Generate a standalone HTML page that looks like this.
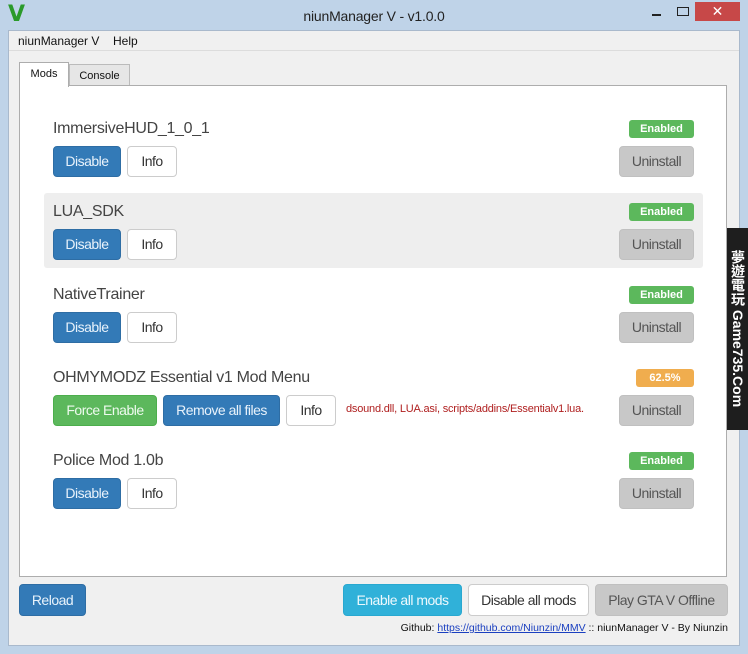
<!DOCTYPE html>
<html><head><meta charset="utf-8"><style>
*{box-sizing:border-box;margin:0;padding:0}
body{width:748px;height:654px;background:#bfd3e8;position:relative;overflow:hidden;font-family:"Liberation Sans",sans-serif;}
.a{position:absolute}
.client{left:8px;top:30px;width:732px;height:616px;background:#f0f0f0;border:1px solid #a9b9cc}
.btn{position:absolute;height:31px;border-radius:4px;font-size:14px;line-height:29px;text-align:center;border:1px solid;letter-spacing:-0.5px}
.pri{background:#337ab7;border-color:#2e6da4;color:#e8f2fb}
.def{background:#fff;border-color:#ccc;color:#333}
.gr{background:#c8c8c8;border-color:#c0c0c0;color:#555}
.suc{background:#5cb85c;border-color:#4cae4c;color:#eefaee}
.info{background:#30b1d9;border-color:#28a8d0;color:#eef9fd}
.badge{position:absolute;height:18px;border-radius:3px;font-size:11px;font-weight:bold;color:#fff;line-height:18px;text-align:center}
.name{position:absolute;font-size:16px;color:#444;letter-spacing:-0.3px}
</style></head><body>
<div class="a" style="left:8px;top:2px;font-size:22px;font-weight:bold;color:#2a9a2a;font-family:'DejaVu Sans',sans-serif">V</div>
<div class="a" style="left:0;top:8px;width:748px;text-align:center;font-size:14px;color:#222;letter-spacing:-0.2px">niunManager V - v1.0.0</div>
<div class="a" style="left:652px;top:14px;width:9px;height:2px;background:#222"></div>
<div class="a" style="left:677px;top:7px;width:12px;height:9px;border:1.5px solid #222"></div>
<div class="a" style="left:695px;top:2px;width:45px;height:19px;background:#c74848;color:#fff;text-align:center;font-size:14px;line-height:19px">✕</div>
<div class="a client"></div>
<div class="a" style="left:18px;top:34px;font-size:12px;color:#111">niunManager V</div>
<div class="a" style="left:113px;top:34px;font-size:12px;color:#111">Help</div>
<div class="a" style="left:9px;top:50px;width:730px;height:1px;background:#dcdcdc"></div>
<div class="a" style="left:69px;top:64px;width:61px;height:22px;background:#e6e6e6;border:1px solid #bbb;font-size:11px;text-align:center;line-height:22px;color:#111">Console</div>
<div class="a" style="left:19px;top:85px;width:708px;height:492px;background:#fff;border:1px solid #adadad"></div>
<div class="a" style="left:19px;top:62px;width:50px;height:25px;background:#fff;border:1px solid #adadad;border-bottom:none;font-size:11px;text-align:center;line-height:22px;color:#111">Mods</div>
<div class="a" style="left:44px;top:193px;width:659px;height:75px;background:#eee;border-radius:3px"></div>

<div class="name" style="left:53px;top:120px">ImmersiveHUD_1_0_1</div>
<div class="btn pri" style="left:53px;top:146px;width:68px">Disable</div>
<div class="btn def" style="left:127px;top:146px;width:50px">Info</div>
<div class="badge" style="left:629px;top:120px;width:65px;background:#5cb85c">Enabled</div>
<div class="btn gr" style="left:619px;top:146px;width:75px">Uninstall</div>

<div class="name" style="left:53px;top:203px">LUA_SDK</div>
<div class="btn pri" style="left:53px;top:229px;width:68px">Disable</div>
<div class="btn def" style="left:127px;top:229px;width:50px">Info</div>
<div class="badge" style="left:629px;top:203px;width:65px;background:#5cb85c">Enabled</div>
<div class="btn gr" style="left:619px;top:229px;width:75px">Uninstall</div>

<div class="name" style="left:53px;top:286px">NativeTrainer</div>
<div class="btn pri" style="left:53px;top:312px;width:68px">Disable</div>
<div class="btn def" style="left:127px;top:312px;width:50px">Info</div>
<div class="badge" style="left:629px;top:286px;width:65px;background:#5cb85c">Enabled</div>
<div class="btn gr" style="left:619px;top:312px;width:75px">Uninstall</div>

<div class="name" style="left:53px;top:369px">OHMYMODZ Essential v1 Mod Menu</div>
<div class="btn suc" style="left:53px;top:395px;width:104px">Force Enable</div>
<div class="btn pri" style="left:163px;top:395px;width:117px">Remove all files</div>
<div class="btn def" style="left:286px;top:395px;width:50px">Info</div>
<div class="a" style="left:346px;top:403px;font-size:11px;color:#b02020;letter-spacing:-0.2px">dsound.dll, LUA.asi, scripts/addins/Essentialv1.lua.</div>
<div class="badge" style="left:636px;top:369px;width:58px;background:#f0ad4e">62.5%</div>
<div class="btn gr" style="left:619px;top:395px;width:75px">Uninstall</div>

<div class="name" style="left:53px;top:452px">Police Mod 1.0b</div>
<div class="btn pri" style="left:53px;top:478px;width:68px">Disable</div>
<div class="btn def" style="left:127px;top:478px;width:50px">Info</div>
<div class="badge" style="left:629px;top:452px;width:65px;background:#5cb85c">Enabled</div>
<div class="btn gr" style="left:619px;top:478px;width:75px">Uninstall</div>

<div class="btn pri" style="left:19px;top:584px;width:67px;height:32px;line-height:30px">Reload</div>
<div class="btn info" style="left:343px;top:584px;width:119px;height:32px;line-height:30px">Enable all mods</div>
<div class="btn def" style="left:468px;top:584px;width:121px;height:32px;line-height:30px">Disable all mods</div>
<div class="btn gr" style="left:595px;top:584px;width:133px;height:32px;line-height:30px">Play GTA V Offline</div>
<div class="a" style="right:20px;top:622px;font-size:10.5px;color:#111">Github: <span style="color:#1a3fc0;text-decoration:underline">https://github.com/Niunzin/MMV</span> :: niunManager V - By Niunzin</div>

<div class="a" style="left:727px;top:228px;width:21px;height:202px;background:#1e1e1e"></div>
<div class="a" style="left:727px;top:231px;width:21px;height:196px;writing-mode:vertical-rl;color:#fff;font-size:14px;font-weight:bold;line-height:21px;font-family:'Liberation Sans','Noto Sans CJK TC',sans-serif;text-align:center">夢遊電玩 Game735.Com</div>
</body></html>
